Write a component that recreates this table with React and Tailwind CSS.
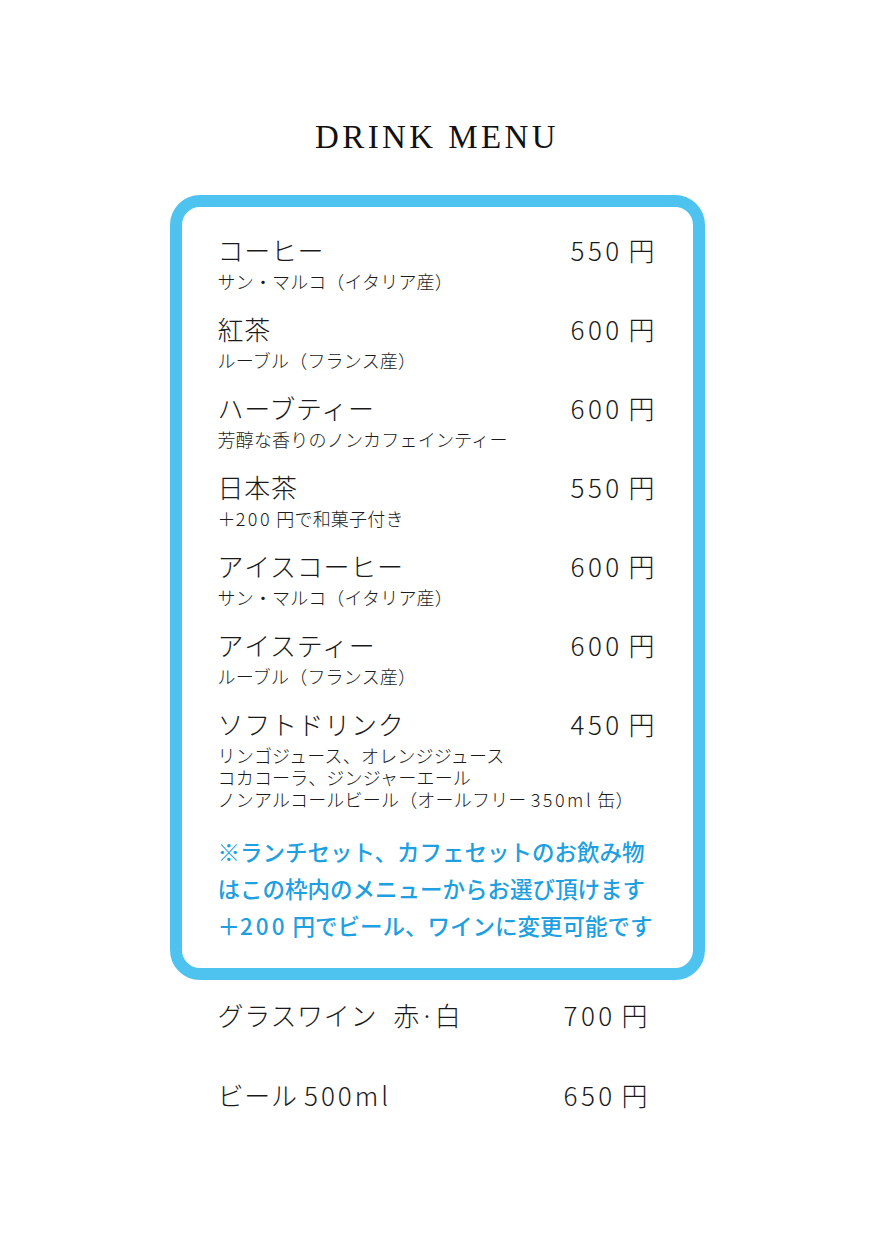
function Num({ children }) {
  return <span className="tracking-[3.5px]">{children}</span>;
}

export default function App() {
  const items = [
    { name: "コーヒー", price: "550", sub: [<>サン・マルコ（イタリア産）</>] },
    { name: "紅茶", price: "600", sub: [<>ルーブル（フランス産）</>] },
    { name: "ハーブティー", price: "600", sub: [<>芳醇な香りのノンカフェインティー</>] },
    { name: "日本茶", price: "550", sub: [<>＋<span className="tracking-[2.5px]">200</span> 円で和菓子付き</>] },
    { name: "アイスコーヒー", price: "600", sub: [<>サン・マルコ（イタリア産）</>] },
    { name: "アイスティー", price: "600", sub: [<>ルーブル（フランス産）</>] },
    {
      name: "ソフトドリンク",
      price: "450",
      sub: [
        <>リンゴジュース、オレンジジュース</>,
        <>コカコーラ、ジンジャーエール</>,
        <>ノンアルコールビール（オールフリー <span className="tracking-[2.5px]">350ml</span> 缶）</>,
      ],
    },
  ];
  const jp = { fontFamily: '"Noto Sans CJK JP", "Noto Sans", sans-serif' };
  return (
    <div className="min-h-[1236px] w-full bg-white pt-[117px] text-[#1a1a1a]" style={jp}>
      <h1
        className="text-center text-[33px] leading-[40px] tracking-[3.4px] text-[#111]"
        style={{ fontFamily: '"Liberation Serif", serif' }}
      >
        DRINK MENU
      </h1>
      <div className="mx-auto mt-[38px] w-[535px] rounded-[30px] border-[12px] border-[#4fc3f0] pb-[24px] pl-[36px] pr-[38px] pt-[23px]">
        <div className="flex flex-col gap-[17px]">
          {items.map((it) => (
            <div key={it.name}>
              <div className="flex items-center justify-between text-[26px] leading-[40px] font-light">
                <span className="tracking-[0.7px]">{it.name}</span>
                <span>
                  <Num>{it.price}</Num> 円
                </span>
              </div>
              {it.sub.map((s, i) => (
                <div key={i} className="text-[18px] leading-[22px] tracking-[0.2px] font-light">
                  {s}
                </div>
              ))}
            </div>
          ))}
        </div>
        <div className="mt-[23px] text-[22.5px] leading-[37px] font-medium text-[#1ea0e0]">
          <div>※ランチセット、カフェセットのお飲み物</div>
          <div>はこの枠内のメニューからお選び頂けます</div>
          <div>
            ＋<span className="tracking-[3px]">200</span> 円でビール、ワインに変更可能です
          </div>
        </div>
      </div>
      <div className="mx-auto mt-[15px] flex w-[535px] flex-col gap-[40px] pl-[48px] pr-[57px]">
        <div className="flex items-center justify-between text-[26px] leading-[40px] font-light">
          <span className="tracking-[0.7px]">
            グラスワイン<span className="ml-[16px]">赤·白</span>
          </span>
          <span>
            <Num>700</Num> 円
          </span>
        </div>
        <div className="flex items-center justify-between text-[26px] leading-[40px] font-light">
          <span className="tracking-[0.7px]">
            ビール <span className="tracking-[3px]">500ml</span>
          </span>
          <span>
            <Num>650</Num> 円
          </span>
        </div>
      </div>
    </div>
  );
}
